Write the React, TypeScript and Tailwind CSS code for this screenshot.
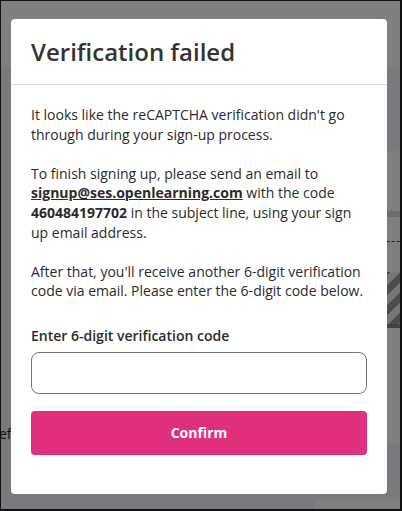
import React, { useState } from 'react';

const font = { fontFamily: '"Open Sans", "Liberation Sans", sans-serif' };

export default function App() {
  const [code, setCode] = useState('');

  return (
    <div
      className="relative h-[511px] w-[402px] overflow-hidden border-l border-t border-r-2 border-b-2 border-[#111] bg-[#f7f0ff]"
      style={font}
    >
      {/* page behind the dialog */}
      <div className="h-[66px] bg-white" />
      <div className="flex">
        <div className="w-[330px] shrink-0 pt-[356px] pl-0">
          <p className="-ml-[2px] text-[14px] text-[#222]">effi</p>
        </div>
        <div className="mt-[84px] w-[200px] shrink-0 rounded-md bg-white">
          <div className="mt-[60px] h-[6px] bg-[#d8d8d8]" />
          <div className="mt-[24px] border-t border-dashed border-[#444]" />
          <div className="mt-[30px] h-[52px] bg-[linear-gradient(135deg,#eee_25%,#999_25%,#999_50%,#eee_50%,#eee_75%,#999_75%)] bg-[length:20px_20px]" />
          <div className="h-[4px] bg-[#8a8585]" />
          <p className="mt-[34px] pl-[8px] text-[8px] text-[#2f7d7a]">Bayyan</p>
          <div className="h-[20px]" />
        </div>
      </div>
      <div className="absolute bottom-0 right-0 h-[10px] w-[86px] rounded-tl-md bg-white" />

      {/* overlay */}
      <div className="absolute inset-0 bg-black/50">
        <div className="pl-[10px] pt-[18px]">
          <div className="w-[376px] rounded-[4px] bg-white text-[#2b2b2b]">
            <div className="border-b border-[#dcdcdc] px-5 pt-[17px] pb-[16px]">
              <h2 className="text-[24px] font-semibold leading-[32px] text-[#333]">Verification failed</h2>
            </div>
            <div className="px-5 pt-5 pb-[39px] text-[14px] leading-[1.4]">
              <p className="mb-[19.6px]">
                It looks like the reCAPTCHA verification didn't go through during your sign-up process.
              </p>
              <p className="mb-[19.6px]">
                To finish signing up, please send an email to{' '}
                <a className="font-bold text-[#2b2b2b] underline" href="#">signup@ses.openlearning.com</a> with the
                code <span className="font-bold">460484197702</span> in the subject line, using your sign up email
                address.
              </p>
              <p>
                After that, you'll receive another 6-digit verification code via email. Please enter the 6-digit code
                below.
              </p>
              <label className="mt-[25px] block font-semibold">Enter 6-digit verification code</label>
              <input
                value={code}
                onChange={(e) => setCode(e.target.value)}
                className="mt-[6px] block h-[42px] w-full rounded-[8px] border border-[#767676] px-3 outline-none"
              />
              <button
                type="button"
                className="mt-[17px] flex h-[44px] w-full items-center justify-center rounded-[4px] bg-[#e0307c] font-bold text-white"
              >
                Confirm
              </button>
            </div>
          </div>
        </div>
      </div>
    </div>
  );
}
